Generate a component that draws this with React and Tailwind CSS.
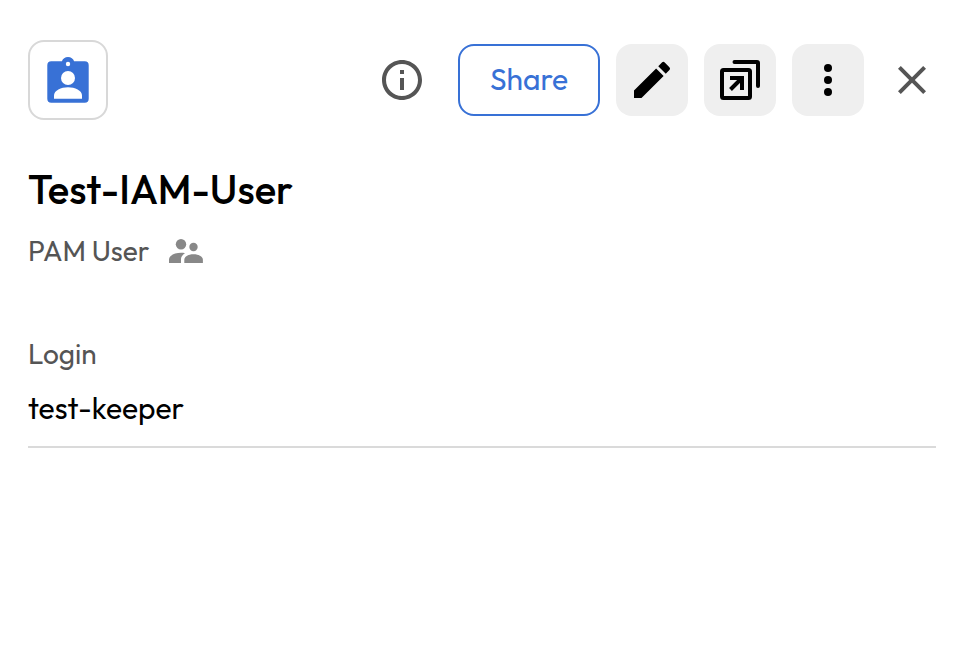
import { MdClose, MdEdit, MdInfoOutline } from "react-icons/md";

function RecordIcon() {
  return (
    <svg className="size-12" viewBox="0 0 48 48" fill="none">
      <path
        fill="#3871d6"
        d="M7.3 5.3H17.9C18.7 2.8 21.1 1 24 1s5.300 1.800 6.100 4.300h10.600a4 4 0 0 1 4 4v33.400a4 4 0 0 1-4 4H7.300a4 4 0 0 1-4-4V9.300a4 4 0 0 1 4-4Z"
      />
      <circle cx="24" cy="8" r="2.200" fill="white" />
      <circle cx="24" cy="22" r="7" fill="white" />
      <path fill="white" d="M10 42.700v-3.200C10 34.500 17 31.300 24 31.300s14 3.200 14 8.200v3.200Z" />
    </svg>
  );
}

function LaunchIcon() {
  return (
    <svg className="size-12" viewBox="0 0 48 48" fill="none" stroke="black" strokeWidth="4">
      <rect x="6" y="14" width="28" height="28" rx="1.500" />
      <path d="M18.500 6H41a1 1 0 0 1 1 1V30" strokeLinecap="round" />
      <path d="M14 22H26V34M26 22 14.500 33.500" />
    </svg>
  );
}

function DotsIcon() {
  return (
    <svg className="size-12" viewBox="0 0 48 48" fill="black">
      <circle cx="24" cy="12" r="4" />
      <circle cx="24" cy="24" r="4" />
      <circle cx="24" cy="36" r="4" />
    </svg>
  );
}

function PeopleIcon() {
  return (
    <svg className="h-6 w-[34px]" viewBox="0 0 34 24" fill="#888888">
      <circle cx="12" cy="5.200" r="5.200" />
      <circle cx="24.500" cy="8" r="4.200" />
      <path d="M0 24V20.500C0 16.500 6 13.800 12 13.800c1.500 0 2.800.100 4 .500-2.700 1.700-4 3.700-4 6V24Z" />
      <path d="M15.300 24v-3.200c0-3.500 4.500-5.600 9.200-5.600s9.400 2.100 9.400 5.600V24Z" />
    </svg>
  );
}

function ToolButton({ label, children }) {
  return (
    <button
      aria-label={label}
      className="flex size-[72px] items-center justify-center rounded-2xl bg-[#efefef] text-black"
    >
      {children}
    </button>
  );
}

export default function App() {
  return (
    <main className="h-[654px] w-[972px] overflow-hidden bg-white pt-10 pr-9 pl-7 font-[Outfit,Lato,sans-serif]">
      <header className="flex h-20 items-center justify-between">
        <div className="flex size-20 items-center justify-center rounded-2xl border-2 border-[#d8d8d8]">
          <RecordIcon />
        </div>
        <div className="flex items-center">
          <button aria-label="Info" className="mr-8 text-[#555555]">
            <MdInfoOutline size={48} />
          </button>
          <button className="mr-4 h-[72px] w-[142px] rounded-2xl border-2 border-[#3871d6] pb-0.5 text-[30px] text-[#3871d6]">
            Share
          </button>
          <div className="flex gap-4">
            <ToolButton label="Edit">
              <MdEdit size={48} />
            </ToolButton>
            <ToolButton label="Launch">
              <LaunchIcon />
            </ToolButton>
            <ToolButton label="More">
              <DotsIcon />
            </ToolButton>
          </div>
          <button aria-label="Close" className="ml-6 text-[#555555]">
            <MdClose size={48} />
          </button>
        </div>
      </header>

      <h1 className="mt-[45px] h-12 text-[40px] leading-[48px] font-medium whitespace-nowrap text-black">
        Test-IAM-User
      </h1>
      <div className="mt-5 flex h-9 items-center">
        <span className="w-[141px] text-[28px] leading-9 whitespace-nowrap text-[#555555]">PAM User</span>
        <PeopleIcon />
      </div>

      <section className="mt-[67px] border-b-2 border-[#dadada] pb-[18px]">
        <div className="h-9 text-[28px] leading-9 text-[#555555]">Login</div>
        <div className="mt-4 h-10 text-[30px] leading-10 text-black">test-keeper</div>
      </section>
    </main>
  );
}
